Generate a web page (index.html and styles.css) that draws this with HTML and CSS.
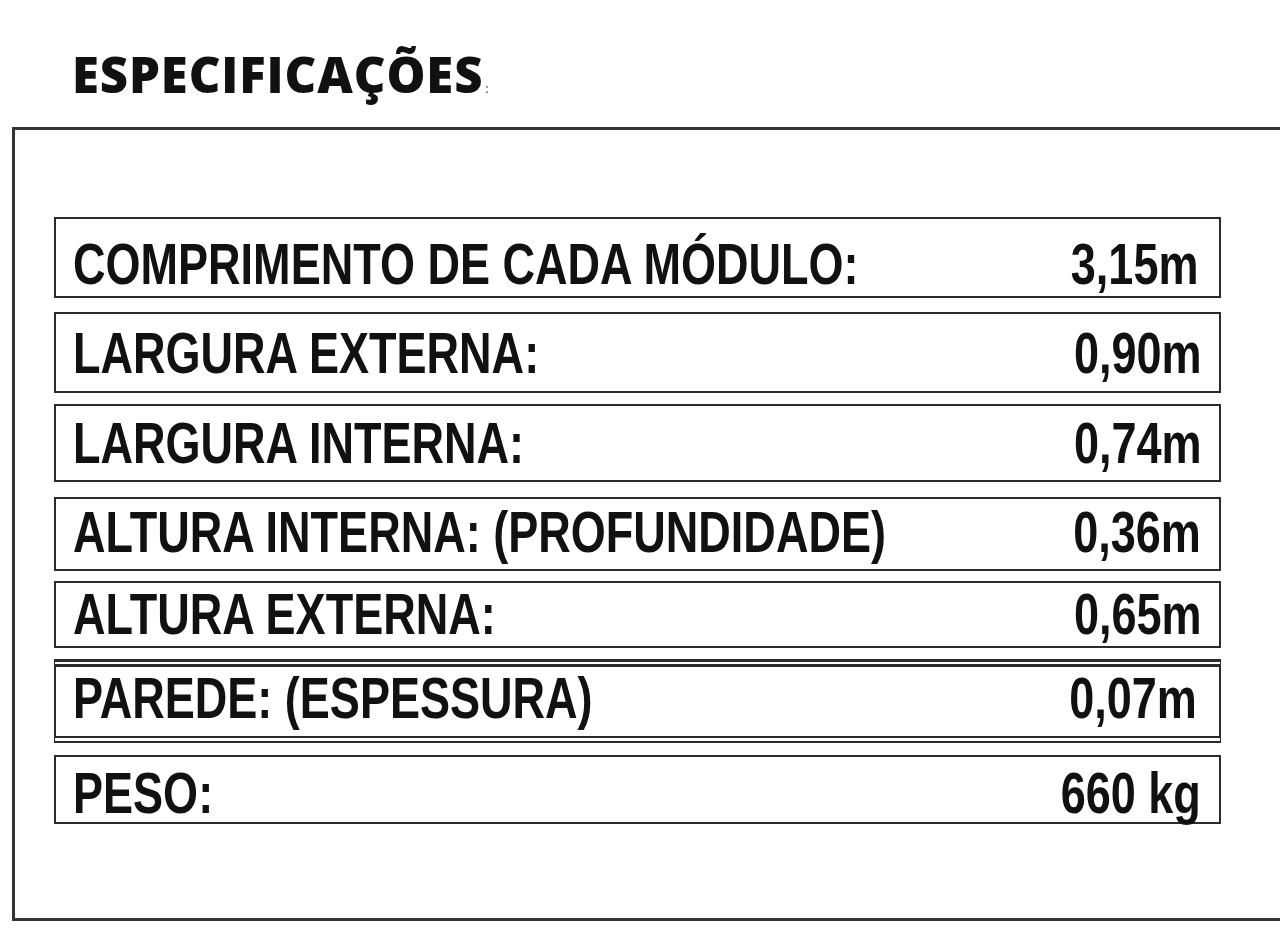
FILE: index.html
```html
<!DOCTYPE html>
<html lang="pt">
<head>
<meta charset="utf-8">
<title>Especificações</title>
<link rel="stylesheet" href="styles.css">
</head>
<body>
<main class="page">
  <h1 class="title">ESPECIFICAÇÕES<span class="title-colon">:</span></h1>
  <section class="panel">
    <div class="spec r1"><span class="label">COMPRIMENTO DE CADA MÓDULO:</span><span class="value">3,15m</span></div>
    <div class="spec r2"><span class="label">LARGURA EXTERNA:</span><span class="value">0,90m</span></div>
    <div class="spec r3"><span class="label">LARGURA INTERNA:</span><span class="value">0,74m</span></div>
    <div class="spec r4"><span class="label">ALTURA INTERNA: (PROFUNDIDADE)</span><span class="value">0,36m</span></div>
    <div class="spec r5"><span class="label">ALTURA EXTERNA:</span><span class="value">0,65m</span></div>
    <div class="spec r6 double"><span class="label">PAREDE: (ESPESSURA)</span><span class="value">0,07m</span></div>
    <div class="spec r7"><span class="label">PESO:</span><span class="value">660 kg</span></div>
  </section>
</main>
</body>
</html>
```

FILE: styles.css
```css
html, body {
  margin: 0;
  padding: 0;
  background: #ffffff;
  overflow: hidden;
}

.page {
  width: 1280px;
  height: 948px;
  overflow: hidden;
  color: #111111;
}

.title {
  margin: 0;
  padding: 50px 0 0 72px;
  height: 81px;
  box-sizing: border-box;
  font-family: "Open Sans", "Lato", "Liberation Sans", sans-serif;
  font-weight: 800;
  font-size: 49px;
  line-height: 49px;
  letter-spacing: 0.9px;
  color: #111111;
  white-space: nowrap;
}

.title-colon {
  font-size: 13px;
  font-weight: 400;
  margin-left: 2px;
  color: #444;
  letter-spacing: 0;
}

.panel {
  margin: 46px 0 0 12px;
  width: 1300px;
  height: 794px;
  box-sizing: border-box;
  border: 3px solid #353535;
  padding: 87px 0 0 39px;
  display: flex;
  flex-direction: column;
}

.spec {
  width: 1167px;
  box-sizing: border-box;
  border: 2.5px solid #2b2b2b;
  display: flex;
  align-items: flex-end;
  padding: 0 17px 0 17px;
  font-family: "Liberation Sans", Arial, sans-serif;
  font-weight: 700;
  font-size: 57px;
  line-height: 1;
  color: #111111;
  white-space: nowrap;
}

.spec .label {
  flex: 1 1 0;
  min-width: 0;
  transform: scaleX(0.79);
  transform-origin: left bottom;
}

.spec .value {
  flex: none;
  transform: scaleX(0.79);
  transform-origin: right bottom;
}

.r1 { height: 81px; padding-bottom: 3px; }
.r2 { height: 81px; margin-top: 14px; padding-bottom: 9px; }
.r3 { height: 78px; margin-top: 11px; padding-bottom: 8px; }
.r4 { height: 74px; margin-top: 15px; padding-bottom: 8px; }
.r5 { height: 67px; margin-top: 10px; padding-bottom: 3px; }
.r6 { height: 84px; margin-top: 11px; padding-bottom: 9px; }
.r7 { height: 69px; margin-top: 12px; padding-bottom: 0px; }

.r1 .value { padding-right: 4px; }
.r4 .value { padding-right: 1px; }
.r6 .value { padding-right: 6px; }
.r7 .value { padding-right: 2px; }

.double {
  border-top: 8px double #2b2b2b;
  border-bottom: 7px double #2b2b2b;
}
```
